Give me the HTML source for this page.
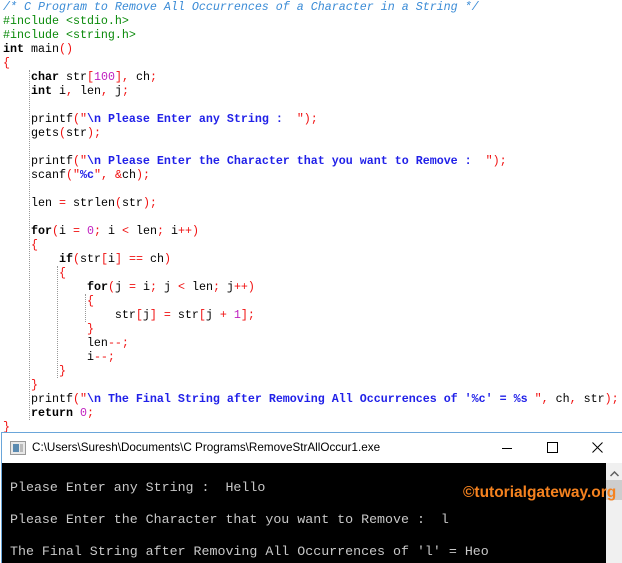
<!DOCTYPE html>
<html><head><meta charset="utf-8"><style>
html,body{margin:0;padding:0;width:622px;height:562px;overflow:hidden;background:#fff}
.code{position:absolute;left:3px;top:0;font-family:"Liberation Mono",monospace;font-size:11.67px;line-height:14px;white-space:pre;color:#000}
.c{color:#3a8bd6;font-style:italic}
.g{color:#0a8a0a}
.k{font-weight:bold}
.s{color:#2020e8;font-weight:bold}
.p{color:#f01010}
.n{color:#c020c0}
.guide{position:absolute;width:0;border-left:1px dotted #999}
.win{position:absolute;left:1px;top:432px;width:620px;height:130px;border-top:1px solid #6aa6da;border-left:1px solid #6aa6da;background:#fff}
.title{position:absolute;left:0;top:0;width:620px;height:30px;background:#fff;font-family:"Liberation Sans",sans-serif;font-size:11.7px;line-height:30px}
.con{position:absolute;left:0;top:30px;width:604px;height:100px;background:#000;font-family:"Liberation Mono",monospace;font-size:13.3px;line-height:16px;color:#c8c8c8;white-space:pre}
.sb{position:absolute;left:604px;top:30px;width:16px;height:100px;background:#f0f0f0}
</style></head><body>
<div class="guide" style="left:29px;top:70px;height:350px"></div>
<div class="guide" style="left:57px;top:266px;height:112px"></div>
<div class="guide" style="left:85px;top:294px;height:28px"></div>
<div class="code"><span class="c">/* C Program to Remove All Occurrences of a Character in a String */</span>
<span class="g">#include &lt;stdio.h&gt;</span>
<span class="g">#include &lt;string.h&gt;</span>
<span class="k">int</span> main<span class="p">()</span>
<span class="p">{</span>
    <span class="k">char</span> str<span class="p">[</span><span class="n">100</span><span class="p">],</span> ch<span class="p">;</span>
    <span class="k">int</span> i<span class="p">,</span> len<span class="p">,</span> j<span class="p">;</span>

    printf<span class="p">(</span><span class="p">"</span><span class="s">\n Please Enter any String :  </span><span class="p">");</span>
    gets<span class="p">(</span>str<span class="p">);</span>

    printf<span class="p">(</span><span class="p">"</span><span class="s">\n Please Enter the Character that you want to Remove :  </span><span class="p">");</span>
    scanf<span class="p">(</span><span class="p">"</span><span class="s">%c</span><span class="p">",</span> <span class="p">&amp;</span>ch<span class="p">);</span>

    len <span class="p">=</span> strlen<span class="p">(</span>str<span class="p">);</span>

    <span class="k">for</span><span class="p">(</span>i <span class="p">=</span> <span class="n">0</span><span class="p">;</span> i <span class="p">&lt;</span> len<span class="p">;</span> i<span class="p">++)</span>
    <span class="p">{</span>
        <span class="k">if</span><span class="p">(</span>str<span class="p">[</span>i<span class="p">]</span> <span class="p">==</span> ch<span class="p">)</span>
        <span class="p">{</span>
            <span class="k">for</span><span class="p">(</span>j <span class="p">=</span> i<span class="p">;</span> j <span class="p">&lt;</span> len<span class="p">;</span> j<span class="p">++)</span>
            <span class="p">{</span>
                str<span class="p">[</span>j<span class="p">]</span> <span class="p">=</span> str<span class="p">[</span>j <span class="p">+</span> <span class="n">1</span><span class="p">];</span>
            <span class="p">}</span>
            len<span class="p">--;</span>
            i<span class="p">--;</span>
        <span class="p">}</span>
    <span class="p">}</span>
    printf<span class="p">(</span><span class="p">"</span><span class="s">\n The Final String after Removing All Occurrences of '%c' = %s </span><span class="p">",</span> ch<span class="p">,</span> str<span class="p">);</span>
    <span class="k">return</span> <span class="n">0</span><span class="p">;</span>
<span class="p">}</span></div>
<div class="win">
 <div class="title">
  <svg style="position:absolute;left:8px;top:8px" width="16" height="14"><rect x="0.5" y="0.5" width="15" height="13" fill="#e8e8e8" stroke="#999"/><rect x="3" y="3" width="6" height="8" fill="#5a8ab0"/><rect x="10" y="3" width="3" height="8" fill="#bbb"/></svg>
  <span style="position:absolute;left:30px;top:0;color:#000">C:\Users\Suresh\Documents\C Programs\RemoveStrAllOccur1.exe</span>
  <div style="position:absolute;left:500px;top:15px;width:10px;height:1px;background:#000"></div>
  <div style="position:absolute;left:545px;top:9px;width:9px;height:9px;border:1px solid #000"></div>
  <svg style="position:absolute;left:590px;top:9px" width="11" height="11"><path d="M0.5 0.5L10.5 10.5M10.5 0.5L0.5 10.5" stroke="#000" stroke-width="1"/></svg>
 </div>
 <div class="con" style="padding:0"><div style="position:absolute;left:8px;top:17px">Please Enter any String :  Hello

Please Enter the Character that you want to Remove :  l

The Final String after Removing All Occurrences of 'l' = Heo</div></div>
 <div class="sb"><svg style="position:absolute;left:4px;top:8px" width="9" height="6"><path d="M0.5 5L4.5 1L8.5 5" stroke="#606060" fill="none" stroke-width="1.5"/></svg><div style="position:absolute;left:0;top:17px;width:16px;height:20px;background:#cdcdcd"></div></div>
 <div style="position:absolute;left:461px;top:51px;color:#f5821f;font-family:'Liberation Sans',sans-serif;font-weight:bold;font-size:15.5px;line-height:18px;white-space:nowrap">©tutorialgateway.org</div>
</div>
</body></html>
